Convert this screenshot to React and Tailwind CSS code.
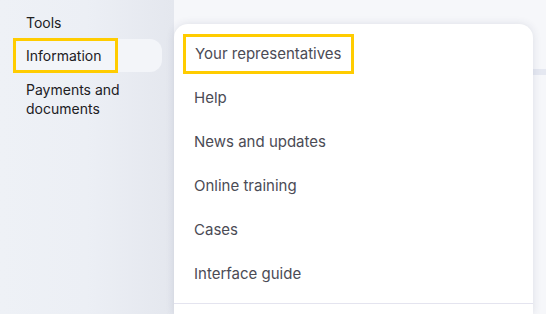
import React from 'react'

const menuItems = [
	'Your representatives',
	'Help',
	'News and updates',
	'Online training',
	'Cases',
	'Interface guide',
]

export default function App() {
	return (
		<div className="flex h-[314px] w-full overflow-hidden font-['Inter',sans-serif]">
			<aside className="w-[174px] shrink-0 bg-gradient-to-r from-[#eef1f6] via-[#ecEff5] to-[#e4e7ee] pl-[13px] pr-[12px] pt-[10px]">
				<div className="flex h-[24px] items-center pl-[13px] text-[14px] text-[#21201f]">Tools</div>
				<div className="mt-[5px] flex h-[33px] items-center rounded-[12px] bg-[#f3f5f9]">
					<div className="flex h-[35px] w-[105px] items-center border-[3px] border-[#ffcc00] px-[10px] text-[14px] text-[#21201f]">
						Information
					</div>
				</div>
				<div className="mt-[8px] pl-[13px] text-[14px] leading-[19px] text-[#21201f]">
					Payments and
					<br />
					documents
				</div>
			</aside>

			<main className="relative flex-1 bg-[#f6f7fa]">
				<div className="mt-[69px] h-[6px] w-full bg-[#e5e8f1]" />

				<div className="absolute left-0 top-[24px] flex h-[290px] w-[359px] flex-col rounded-t-[14px] bg-white shadow-[0_0_8px_rgba(40,50,90,0.12)]">
					<ul className="flex flex-col pt-[8px]">
						{menuItems.map((item, i) => (
							<li key={item} className="flex h-[44px] items-center pl-[9px]">
								{i === 0 ? (
									<span className="flex h-[40px] items-center border-[3px] border-[#ffcc00] px-[9px] text-[15px] text-[#4b4b55]">
										{item}
									</span>
								) : (
									<span className="pl-[11px] text-[15px] text-[#4b4b55]">{item}</span>
								)}
							</li>
						))}
					</ul>
					<div className="mt-[7px] h-px w-full bg-[#e4e4ef]" />
				</div>
			</main>
		</div>
	)
}
